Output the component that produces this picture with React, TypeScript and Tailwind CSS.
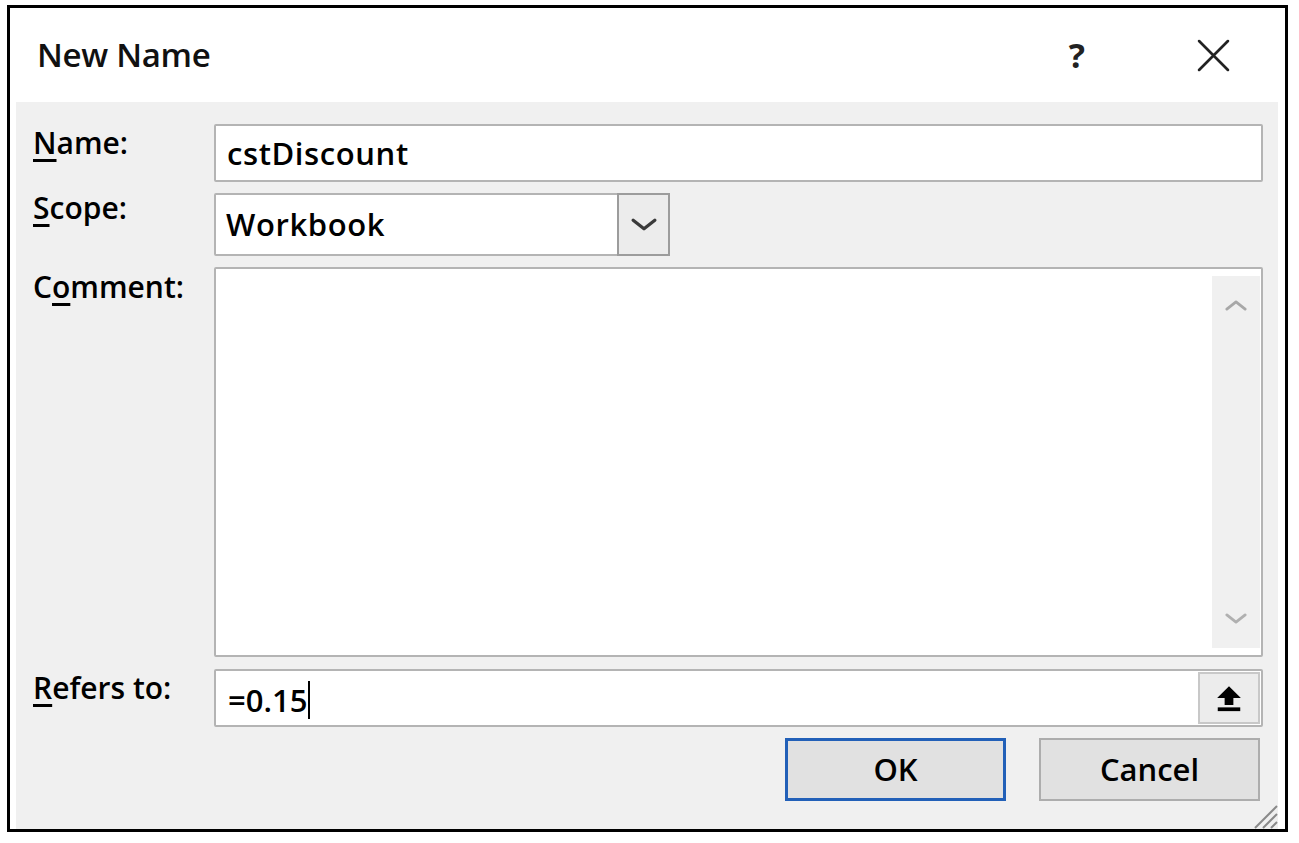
import React from "react";

const font = { fontFamily: '"Open Sans", "Noto Sans", Arial, sans-serif' };

function Label({ pre, u, post, className = "" }: { pre?: string; u: string; post: string; className?: string }) {
  return (
    <div className={`w-[198px] shrink-0 pl-[17px] text-[30px] leading-[40px] font-semibold text-black ${className}`}>
      {pre}
      <span className="underline decoration-[3px] underline-offset-[5px]">{u}</span>
      {post}
    </div>
  );
}

function Chevron({ up, className }: { up?: boolean; className: string }) {
  return (
    <svg viewBox="0 0 24 12" className={className} fill="none" stroke="currentColor" strokeWidth="3" strokeLinecap="round" strokeLinejoin="round">
      {up ? <path d="M2 10 L12 2 L22 10" /> : <path d="M2 2 L12 10 L22 2" />}
    </svg>
  );
}

const App: React.FC = () => {
  return (
    <div className="w-[1299px] h-[843px] bg-white pt-[5px] pl-[7px]" style={font}>
      <div className="w-[1281px] h-[827px] border-[3px] border-black bg-white flex flex-col">
        {/* title bar */}
        <div className="h-[94px] shrink-0 flex items-center pl-[27px] pr-[55px]">
          <div className="text-[33px] font-semibold text-[#111] tracking-[-0.3px]">New Name</div>
          <div className="ml-auto text-[34px] font-bold text-[#222]">?</div>
          <svg viewBox="0 0 32 32" className="w-[33px] h-[33px] ml-[112px] text-[#222]" stroke="currentColor" strokeWidth="2.6" strokeLinecap="round">
            <path d="M2 2 L30 30 M30 2 L2 30" />
          </svg>
        </div>

        {/* client area */}
        <div className="relative flex-1 ml-[6px] mr-[7px] bg-[#f0f0f0] flex flex-col pt-[22px] pr-[15px]">
          {/* Name */}
          <div className="flex">
            <Label u="N" post="ame:" className="-mt-[1px]" />
            <div className="flex-1 h-[58px] border-2 border-[#b4b4b4] rounded-[2px] bg-white flex items-center pl-[11px] text-[31px] tracking-[0.6px] font-semibold text-black">
              cstDiscount
            </div>
          </div>

          {/* Scope */}
          <div className="flex mt-[11px]">
            <Label u="S" post="cope:" className="-mt-[5px]" />
            <div className="w-[456px] h-[63px] border-2 border-[#b4b4b4] rounded-[2px] bg-white flex">
              <div className="flex-1 flex items-center pl-[10px] text-[31px] tracking-[0.6px] font-semibold text-black">Workbook</div>
              <div className="w-[53px] -my-[2px] -mr-[2px] border-2 border-[#9c9c9c] bg-[#ececec] flex items-center justify-center">
                <Chevron className="w-[26px] h-[13px] text-[#3a3a3a]" />
              </div>
            </div>
          </div>

          {/* Comment */}
          <div className="flex mt-[11px]">
            <Label pre="C" u="o" post="mment:" />
            <div className="flex-1 h-[390px] border-2 border-[#b4b4b4] rounded-[2px] bg-white flex justify-end">
              <div className="w-[48px] my-[7px] mr-[1px] bg-[#f0f0f0] flex flex-col items-center justify-between py-[24px]">
                <Chevron up className="w-[22px] h-[11px] text-[#a8a8a8]" />
                <Chevron className="w-[22px] h-[11px] text-[#b0b0b0]" />
              </div>
            </div>
          </div>

          {/* Refers to */}
          <div className="flex mt-[12px]">
            <Label u="R" post="efers to:" className="-mt-[1px]" />
            <div className="flex-1 h-[58px] border-2 border-[#b4b4b4] rounded-[2px] bg-white flex">
              <div className="flex-1 flex items-center pl-[12px] pt-[4px] text-[31px] font-semibold text-black">
                =0.15<span className="inline-block w-[2px] h-[38px] bg-black ml-[1px]" />
              </div>
              <div className="w-[62px] my-[1px] mr-[1px] border-2 border-[#c8c8c8] bg-[#ececec] flex items-center justify-center">
                <svg viewBox="0 0 24 24" className="w-[30px] h-[30px] text-black" fill="currentColor">
                  <path d="M12 2.5 L21.5 12 H15.5 V17.5 H8.5 V12 H2.5 Z" />
                  <rect x="3" y="19.5" width="18" height="3" />
                </svg>
              </div>
            </div>
          </div>

          {/* Buttons */}
          <div className="flex justify-end gap-[33px] mt-[11px] pr-[3px]">
            <button className="w-[221px] h-[63px] border-[3px] border-[#2260b8] bg-[#e1e1e1] text-[31px] font-semibold text-black">OK</button>
            <button className="w-[221px] h-[63px] border-2 border-[#adadad] bg-[#e1e1e1] text-[31px] font-semibold text-black">Cancel</button>
          </div>

          {/* size grip */}
          <svg viewBox="0 0 28 28" className="absolute right-0 bottom-0 w-[28px] h-[28px]" stroke="#8a8a8a" strokeWidth="2">
            <path d="M27 5 L5 27 M27 13 L13 27 M27 21 L21 27" />
          </svg>
        </div>
      </div>
    </div>
  );
};

export default App;
